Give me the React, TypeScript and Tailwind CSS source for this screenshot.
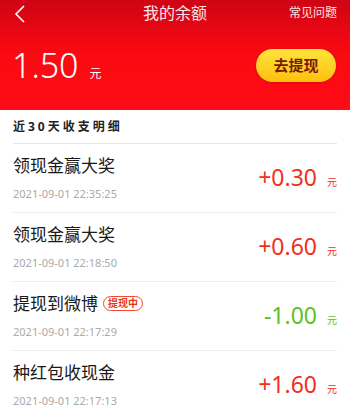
import React from 'react';

interface Record {
  title: string;
  time: string;
  amount: string;
  income: boolean;
  badge?: string;
}

const records: Record[] = [
  { title: '领现金赢大奖', time: '2021-09-01 22:35:25', amount: '+0.30', income: true },
  { title: '领现金赢大奖', time: '2021-09-01 22:18:50', amount: '+0.60', income: true },
  { title: '提现到微博', time: '2021-09-01 22:17:29', amount: '-1.00', income: false, badge: '提现中' },
  { title: '种红包收现金', time: '2021-09-01 22:17:13', amount: '+1.60', income: true },
];

const font = { fontFamily: '"Noto Sans", "Noto Sans CJK SC", sans-serif' };
const numFont = { fontFamily: '"Noto Sans", sans-serif' };

const App: React.FC = () => {
  return (
    <div className="w-[350px] h-[412px] overflow-hidden bg-white" style={font}>
      {/* header */}
      <div className="h-[110px] bg-gradient-to-b from-[#cf0414] via-[#fc0a12] to-[#ff0a16] text-white">
        <div className="h-[26px] relative flex items-center justify-between px-[13px]">
          <svg width="14" height="20" viewBox="0 0 14 20" className="mt-[2px]">
            <path d="M11 2 L3 10 L11 18" fill="none" stroke="white" strokeWidth="1.6" />
          </svg>
          <span className="absolute left-0 right-0 text-center text-[16px] leading-none opacity-90 pointer-events-none">我的余额</span>
          <span className="text-[12px] leading-none opacity-90">常见问题</span>
        </div>
        <div className="flex items-center justify-between pl-[12px] pr-[14px] mt-[22px]">
          <div className="flex items-baseline">
            <span className="text-[34px] leading-none font-light" style={numFont}>1.50</span>
            <span className="text-[12px] ml-[11px]">元</span>
          </div>
          <div className="w-[80px] h-[33px] rounded-full bg-gradient-to-b from-[#ffe43a] to-[#fcc007] shadow-[0_1px_2px_rgba(150,0,0,0.35)] flex items-center justify-center text-[15px] font-bold text-[#7a1a00]">
            去提现
          </div>
        </div>
      </div>

      {/* list */}
      <div className="px-[13px]">
        <div className="h-[34px] flex items-center border-b border-[#e6e6e6] text-[12px] font-bold text-[#222] tracking-[3px]">
          近30天收支明细
        </div>
        {records.map((r, i) => (
          <div key={i} className="h-[69px] flex items-center justify-between border-b border-[#ececec]">
            <div className="flex flex-col">
              <div className="flex items-center">
                <span className="text-[17px] leading-none text-[#1a1a1a]">{r.title}</span>
                {r.badge && (
                  <span className="ml-[5px] px-[4px] h-[15px] rounded-full border border-[#f04a32] text-[#e8341c] text-[10px] leading-[13px] font-bold">
                    {r.badge}
                  </span>
                )}
              </div>
              <span className="mt-[14px] text-[11px] leading-none text-[#aaaaaa]">{r.time}</span>
            </div>
            <div className={`flex items-baseline ${r.income ? 'text-[#f0301a]' : 'text-[#5cc419]'}`}>
              <span className="text-[23px] leading-none" style={numFont}>{r.amount}</span>
              <span className="text-[10px] ml-[10px]">元</span>
            </div>
          </div>
        ))}
      </div>
    </div>
  );
};

export default App;
